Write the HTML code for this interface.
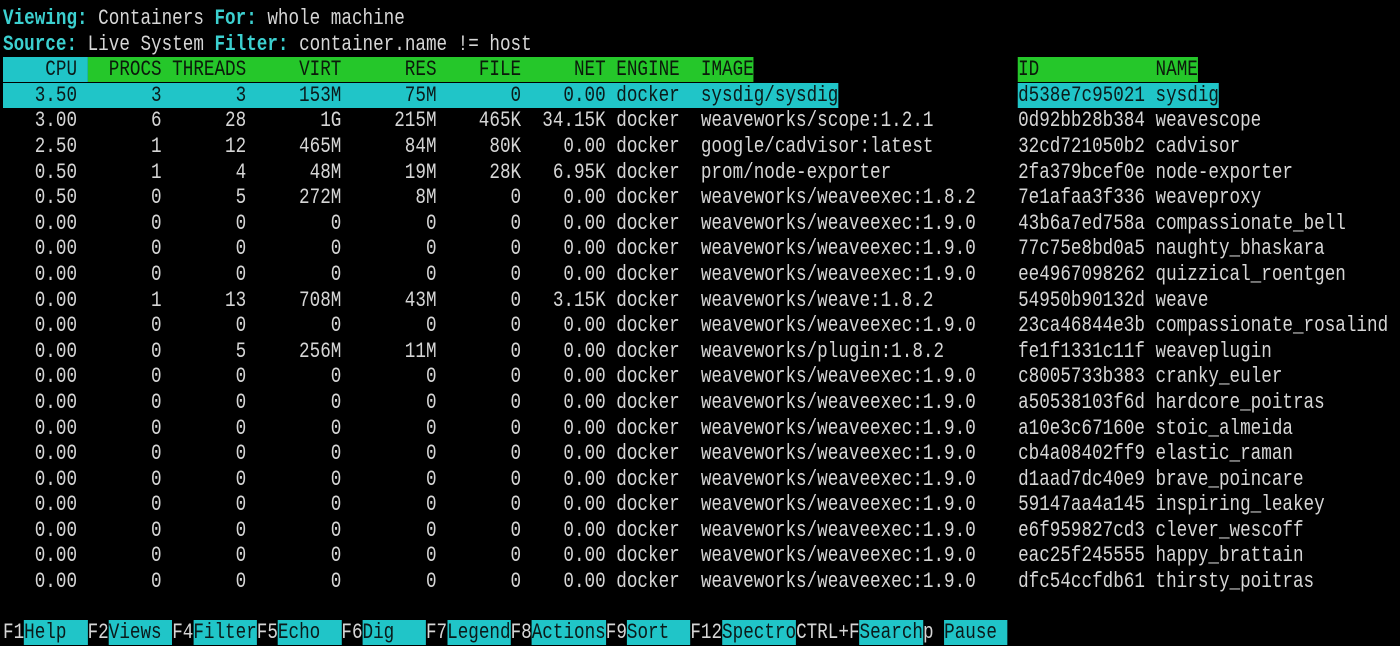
<!DOCTYPE html>
<html><head><meta charset="utf-8"><style>
html,body{margin:0;padding:0;background:#000;width:1400px;height:640px;overflow:hidden}
#t{position:absolute;left:3px;top:6px;margin:0;font-family:"Liberation Mono",monospace;font-size:22px;line-height:25.6px;color:#d6d6d6;white-space:pre;transform:scaleX(0.8009);transform-origin:0 0}
.c{background:#20c5c8;color:#0b1a1a}
.g{background:#25c72a;color:#0b1a0b}
.l{color:#3cd0d0;font-weight:bold}
</style></head><body><pre id="t"><span class="l">Viewing:</span> Containers <span class="l">For:</span> whole machine
<span class="l">Source:</span> Live System <span class="l">Filter:</span> container.name != host
<span class="c">    CPU </span><span class="g">  PROCS THREADS     VIRT      RES    FILE     NET ENGINE  IMAGE</span>                         <span class="g">ID           NAME</span>
<span class="c">   3.50       3       3     153M      75M       0    0.00 docker  sysdig/sysdig</span>                 <span class="c">d538e7c95021 sysdig</span>
   3.00       6      28       1G     215M    465K  34.15K docker  weaveworks/scope:1.2.1        0d92bb28b384 weavescope
   2.50       1      12     465M      84M     80K    0.00 docker  google/cadvisor:latest        32cd721050b2 cadvisor
   0.50       1       4      48M      19M     28K   6.95K docker  prom/node-exporter            2fa379bcef0e node-exporter
   0.50       0       5     272M       8M       0    0.00 docker  weaveworks/weaveexec:1.8.2    7e1afaa3f336 weaveproxy
   0.00       0       0        0        0       0    0.00 docker  weaveworks/weaveexec:1.9.0    43b6a7ed758a compassionate_bell
   0.00       0       0        0        0       0    0.00 docker  weaveworks/weaveexec:1.9.0    77c75e8bd0a5 naughty_bhaskara
   0.00       0       0        0        0       0    0.00 docker  weaveworks/weaveexec:1.9.0    ee4967098262 quizzical_roentgen
   0.00       1      13     708M      43M       0   3.15K docker  weaveworks/weave:1.8.2        54950b90132d weave
   0.00       0       0        0        0       0    0.00 docker  weaveworks/weaveexec:1.9.0    23ca46844e3b compassionate_rosalind
   0.00       0       5     256M      11M       0    0.00 docker  weaveworks/plugin:1.8.2       fe1f1331c11f weaveplugin
   0.00       0       0        0        0       0    0.00 docker  weaveworks/weaveexec:1.9.0    c8005733b383 cranky_euler
   0.00       0       0        0        0       0    0.00 docker  weaveworks/weaveexec:1.9.0    a50538103f6d hardcore_poitras
   0.00       0       0        0        0       0    0.00 docker  weaveworks/weaveexec:1.9.0    a10e3c67160e stoic_almeida
   0.00       0       0        0        0       0    0.00 docker  weaveworks/weaveexec:1.9.0    cb4a08402ff9 elastic_raman
   0.00       0       0        0        0       0    0.00 docker  weaveworks/weaveexec:1.9.0    d1aad7dc40e9 brave_poincare
   0.00       0       0        0        0       0    0.00 docker  weaveworks/weaveexec:1.9.0    59147aa4a145 inspiring_leakey
   0.00       0       0        0        0       0    0.00 docker  weaveworks/weaveexec:1.9.0    e6f959827cd3 clever_wescoff
   0.00       0       0        0        0       0    0.00 docker  weaveworks/weaveexec:1.9.0    eac25f245555 happy_brattain
   0.00       0       0        0        0       0    0.00 docker  weaveworks/weaveexec:1.9.0    dfc54ccfdb61 thirsty_poitras

F1<span class="c">Help  </span>F2<span class="c">Views </span>F4<span class="c">Filter</span>F5<span class="c">Echo  </span>F6<span class="c">Dig   </span>F7<span class="c">Legend</span>F8<span class="c">Actions</span>F9<span class="c">Sort  </span>F12<span class="c">Spectro</span>CTRL+F<span class="c">Search</span>p <span class="c">Pause </span></pre></body></html>
